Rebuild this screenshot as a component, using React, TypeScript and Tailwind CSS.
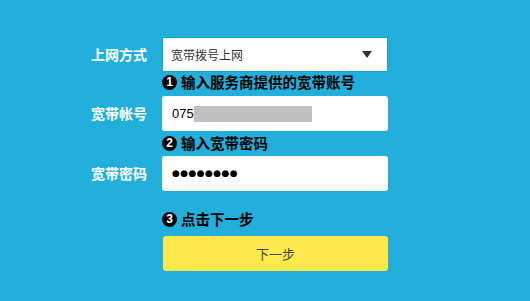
export default function App() {
    const font = { fontFamily: '"Noto Sans CJK SC", "Liberation Sans", sans-serif' };
    return (
        <div className="w-[530px] h-[301px] bg-[#23afdc] overflow-hidden" style={font}>
            <div className="flex flex-col pt-[37px] pl-[80px]">
                {/* Connection type */}
                <div className="flex items-center h-[35px]">
                    <div className="w-[82px] text-right pr-[15px] text-white font-bold text-[14px]">上网方式</div>
                    <div className="w-[226px] h-[35px] bg-white border border-[#1a9fd0] flex items-center justify-between pl-[8px] pr-[15px]">
                        <span className="text-[12px] text-[#333]">宽带拨号上网</span>
                        <span className="w-0 h-0 border-l-[5px] border-r-[5px] border-t-[7px] border-l-transparent border-r-transparent border-t-[#333]" />
                    </div>
                </div>

                <Step n="1" text="输入服务商提供的宽带账号" className="mt-[2px] mb-[6px]" />

                {/* Account */}
                <div className="flex items-center h-[35px]">
                    <div className="w-[82px] text-right pr-[15px] text-white font-bold text-[14px]">宽带帐号</div>
                    <div className="w-[226px] h-[35px] bg-white rounded-[3px] flex items-center pl-[10px]">
                        <span className="text-[13px] text-black" style={{ fontFamily: '"Liberation Sans", sans-serif' }}>075</span>
                        <span className="w-[118px] h-[16px] bg-[#c0c0c0]" />
                    </div>
                </div>

                <Step n="2" text="输入宽带密码" className="mt-[4px] mb-[5px]" />

                {/* Password */}
                <div className="flex items-center h-[35px]">
                    <div className="w-[82px] text-right pr-[15px] text-white font-bold text-[14px]">宽带密码</div>
                    <div className="w-[226px] h-[35px] bg-white rounded-[3px] flex items-center pl-[10px]">
                        <span className="text-[9px] text-black tracking-[0.4px]" style={{ fontFamily: '"DejaVu Sans", sans-serif' }}>●●●●●●●●</span>
                    </div>
                </div>

                <Step n="3" text="点击下一步" className="mt-[20px] mb-[9px]" />

                <div className="flex">
                    <div className="w-[82px]" />
                    <button className="w-[225px] h-[35px] bg-[#ffe94c] rounded-[3px] text-[13px] text-[#444] ml-[1px]">下一步</button>
                </div>
            </div>
        </div>
    );
}

function Step({ n, text, className }: { n: string; text: string; className: string }) {
    return (
        <div className={`flex items-center h-[16px] ml-[82px] ${className}`}>
            <span className="w-[15px] h-[15px] rounded-full bg-black text-white text-[12px] font-bold flex items-center justify-center leading-none" style={{ fontFamily: '"Liberation Sans", sans-serif' }}>{n}</span>
            <span className="ml-[4px] text-[14.5px] leading-none font-bold text-black">{text}</span>
        </div>
    );
}
